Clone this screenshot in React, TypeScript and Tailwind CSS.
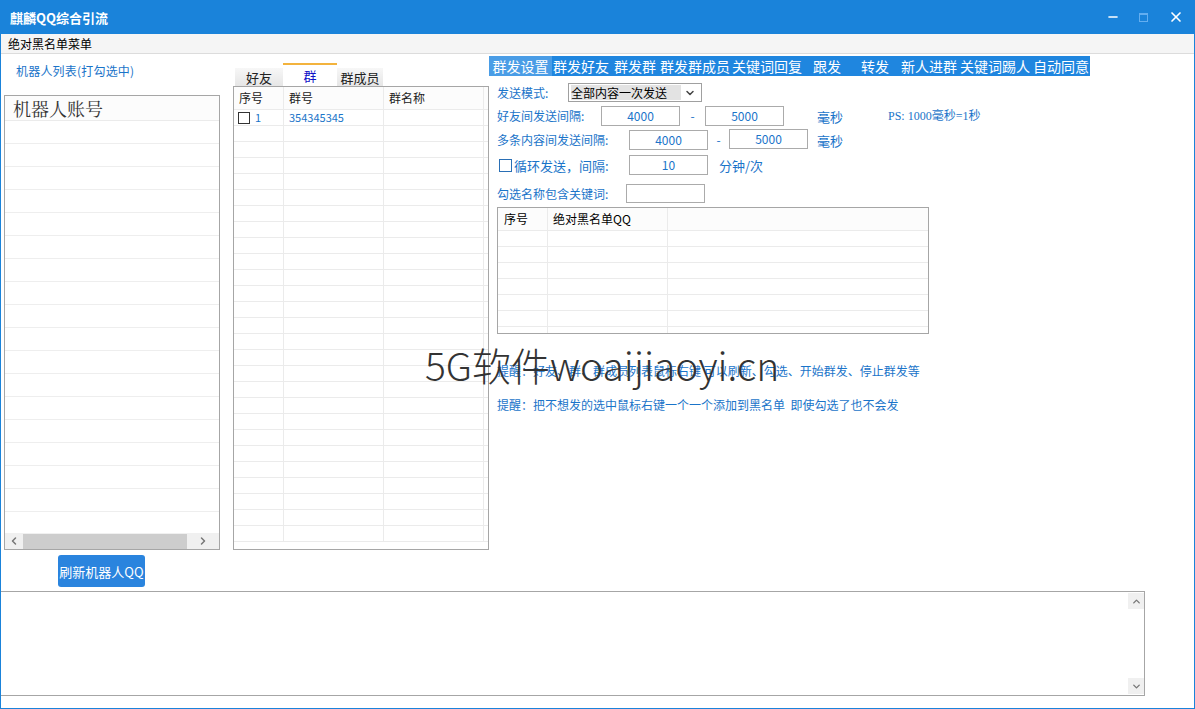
import { X, Minus, ChevronLeft, ChevronRight, ChevronUp, ChevronDown } from 'lucide-react';

const FONT = "font-['Noto_Sans_CJK_SC','Microsoft_YaHei',sans-serif]";

const rightTabs = [
  { label: '群发设置', w: 'w-[63px]', active: true },
  { label: '群发好友', w: 'w-[58px]' },
  { label: '群发群', w: 'w-[50px]' },
  { label: '群发群成员', w: 'w-[70px]' },
  { label: '关键词回复', w: 'w-[74px]' },
  { label: '跟发', w: 'w-[46px]' },
  { label: '转发', w: 'w-[50px]' },
  { label: '新人进群', w: 'w-[58px]' },
  { label: '关键词踢人', w: 'w-[74px]' },
  { label: '自动同意', w: 'w-[58px]' },
];

const NumBox = ({ value, className = '' }: { value?: string; className?: string }) => (
  <div
    className={`w-[79px] h-[20px] border border-[#ababab] bg-white flex items-center justify-center text-[12px] text-[#1a74c9] ${className}`}
  >
    {value}
  </div>
);

const App = () => {
  const robotRows = Array.from({ length: 18 });
  const groupRows = Array.from({ length: 27 });
  const blackRows = Array.from({ length: 7 });

  return (
    <div
      className={`${FONT} relative w-[1195px] h-[709px] bg-white border-x border-b border-[#1a83da] overflow-hidden flex flex-col`}
    >
      {/* title bar */}
      <div className="h-[34px] shrink-0 bg-[#1a83da] flex items-center justify-between pl-[9px]">
        <span className="text-white text-[13px] font-bold leading-none">麒麟QQ综合引流</span>
        <div className="flex items-center h-full">
          <div className="w-[30px] flex justify-center text-white">
            <Minus size={14} strokeWidth={2.5} />
          </div>
          <div className="w-[30px] flex justify-center">
            <div className="w-[9px] h-[9px] border border-[#63aef0] border-t-2" />
          </div>
          <div className="w-[36px] flex justify-center text-white">
            <X size={16} strokeWidth={2.5} />
          </div>
        </div>
      </div>

      {/* menu bar */}
      <div className="h-[20px] shrink-0 bg-[#f5f5f5] border-b border-[#dcdcdc] flex items-center pl-[7px]">
        <span className="text-[12px] text-black leading-none">绝对黑名单菜单</span>
      </div>

      {/* main */}
      <div className="h-[537px] shrink-0 flex">
        {/* left column */}
        <div className="w-[232px] shrink-0 pl-[3px]">
          <div className="h-[41px] pt-[9px] pl-[12px] text-[12px] text-[#1a74c9] leading-[16px] tracking-[0.2px]">
            机器人列表(打勾选中)
          </div>
          <div className="w-[216px] h-[455px] border border-[#a6a6a6] flex flex-col">
            <div className="h-[25px] border-b border-[#ebebeb] bg-[#fcfcfc] pl-[8px] flex items-center text-[18px] text-[#333] leading-none font-['Noto_Serif_CJK_SC','Noto_Sans_CJK_SC',serif]">
              机器人账号
            </div>
            <div className="flex-1 overflow-hidden">
              {robotRows.map((_, i) => (
                <div key={i} className="h-[23px] border-b border-[#eeeeee]" />
              ))}
            </div>
            <div className="h-[16px] bg-[#f0f0f0] flex items-center">
              <div className="w-[18px] flex justify-center text-[#777]">
                <ChevronLeft size={12} strokeWidth={3} />
              </div>
              <div className="w-[164px] h-[15px] bg-[#cdcdcd]" />
              <div className="flex-1 flex justify-center text-[#777]">
                <ChevronRight size={12} strokeWidth={3} />
              </div>
            </div>
          </div>
          <button className="mt-[5px] ml-[54px] w-[87px] h-[32px] rounded-[3px] bg-[#2a84de] text-white text-[13px] leading-none">
            刷新机器人QQ
          </button>
        </div>

        {/* middle column */}
        <div className="w-[256px] shrink-0 pt-[9px]">
          <div className="h-[23px] flex items-end pl-[2px]">
            <div className="w-[48px] h-[18px] bg-gradient-to-b from-[#f7f7f7] to-[#e6e6e6] flex items-center justify-center text-[13px] text-[#222] leading-none">
              好友
            </div>
            <div className="w-[54px] h-[23px] bg-white border-t-2 border-[#f3b33d] flex items-center justify-center text-[13px] text-[#1010c8] leading-none">
              群
            </div>
            <div className="w-[46px] h-[18px] bg-gradient-to-b from-[#f7f7f7] to-[#e6e6e6] flex items-center justify-center text-[13px] text-[#222] leading-none">
              群成员
            </div>
          </div>
          <div className="h-[464px] border border-[#a6a6a6] overflow-hidden">
            <div className="h-[23px] grid grid-cols-[50px_100px_100px_1fr] border-b border-[#ebebeb] bg-[#fcfcfc] text-[12px] text-[#222]">
              <div className="border-r border-[#ebebeb] flex items-center pl-[5px]">序号</div>
              <div className="border-r border-[#ebebeb] flex items-center pl-[5px]">群号</div>
              <div className="border-r border-[#ebebeb] flex items-center pl-[5px]">群名称</div>
              <div />
            </div>
            {groupRows.map((_, i) => (
              <div
                key={i}
                className="h-[16px] grid grid-cols-[50px_100px_100px_1fr] border-b border-[#ebebeb] text-[11px] text-[#1a74c9] leading-none"
              >
                <div className="border-r border-[#ebebeb] flex items-center pl-[4px] gap-[5px]">
                  {i === 0 && (
                    <>
                      <span className="w-[12px] h-[12px] border border-[#333] bg-white" />
                      <span>1</span>
                    </>
                  )}
                </div>
                <div className="border-r border-[#ebebeb] flex items-center pl-[5px]">
                  {i === 0 ? '354345345' : ''}
                </div>
                <div className="border-r border-[#ebebeb]" />
                <div />
              </div>
            ))}
          </div>
        </div>

        {/* right column */}
        <div className="flex-1 pt-[2px]">
          <div className="h-[20px] flex">
            {rightTabs.map((t) => (
              <div
                key={t.label}
                className={`${t.w} h-full flex items-center justify-center text-[14px] leading-none text-white ${
                  t.active ? 'bg-[#4a9de6]' : 'bg-[#1f86df]'
                }`}
              >
                {t.label}
              </div>
            ))}
          </div>

          <div className="pl-[8px] text-[12px] text-[#1a74c9] leading-none">
            <div className="mt-[7px] h-[19px] flex items-center">
              <span className="w-[71px]">发送模式:</span>
              <div className="w-[134px] h-[19px] border border-[#a0a0a0] flex items-center justify-between pl-[2px] pr-[5px]">
                <span className="bg-[#e3e3e3] text-black text-[12px] h-[15px] flex items-center pr-[14px]">全部内容一次发送</span>
                <ChevronDown size={12} strokeWidth={3} className="text-[#444]" />
              </div>
            </div>

            <div className="mt-[4px] h-[20px] flex items-center">
              <span className="w-[104px]">好友间发送间隔:</span>
              <NumBox value="4000" />
              <span className="w-[25px] text-center">-</span>
              <NumBox value="5000" />
              <span className="ml-[33px] text-[13px]">毫秒</span>
              <span className="ml-[45px] text-[12px] font-['Liberation_Serif','Noto_Sans_CJK_SC',serif]">PS: 1000毫秒=1秒</span>
            </div>

            <div className="mt-[4px] h-[20px] flex items-center">
              <span className="w-[132px]">多条内容间发送间隔:</span>
              <NumBox value="4000" />
              <span className="w-[21px] text-center">-</span>
              <NumBox value="5000" className="-mt-[3px]" />
              <span className="ml-[9px] text-[13px]">毫秒</span>
            </div>

            <div className="mt-[5px] h-[20px] flex items-center">
              <div className="w-[132px] flex items-center pl-[2px]">
                <span className="w-[13px] h-[13px] border border-[#2a6fb5] bg-white mr-[2px]" />
                <span className="text-[13px]">循环发送，间隔:</span>
              </div>
              <NumBox value="10" />
              <span className="ml-[11px] text-[13px]">分钟/次</span>
            </div>

            <div className="mt-[9px] h-[19px] flex items-center">
              <span className="w-[129px]">勾选名称包含关键词:</span>
              <div className="w-[79px] h-[19px] border border-[#ababab]" />
            </div>

            <div className="mt-[4px] w-[432px] h-[127px] border border-[#a6a6a6] overflow-hidden">
              <div className="h-[23px] grid grid-cols-[50px_120px_1fr] border-b border-[#ebebeb] bg-[#fcfcfc] text-[12px] text-black">
                <div className="border-r border-[#ebebeb] flex items-center pl-[6px]">序号</div>
                <div className="border-r border-[#ebebeb] flex items-center pl-[5px]">绝对黑名单QQ</div>
                <div />
              </div>
              {blackRows.map((_, i) => (
                <div key={i} className="h-[16px] grid grid-cols-[50px_120px_1fr] border-b border-[#ebebeb]">
                  <div className="border-r border-[#ebebeb]" />
                  <div className="border-r border-[#ebebeb]" />
                  <div />
                </div>
              ))}
            </div>

            <div className="mt-[29px] h-[16px] flex items-center">
              提醒：好友、群、群成员列表鼠标右键 可以刷新、勾选、开始群发、停止群发等
            </div>
            <div className="mt-[18px] h-[16px] flex items-center">
              提醒：把不想发的选中鼠标右键一个一个添加到黑名单&nbsp;&nbsp;即使勾选了也不会发
            </div>
          </div>
        </div>
      </div>

      {/* log box */}
      <div className="w-[1144px] h-[105px] shrink-0 border-y border-r border-[#a6a6a6] flex justify-end">
        <div className="w-[16px] h-full flex flex-col justify-between py-[1px]">
          <div className="h-[16px] bg-[#f0f0f0] flex items-center justify-center text-[#777]">
            <ChevronUp size={11} strokeWidth={3} />
          </div>
          <div className="h-[16px] bg-[#f0f0f0] flex items-center justify-center text-[#777]">
            <ChevronDown size={11} strokeWidth={3} />
          </div>
        </div>
      </div>

      {/* watermark */}
      <div className="absolute left-[424px] top-[345px] text-[39px] leading-none text-[#333] font-light font-['Noto_Sans_CJK_SC',sans-serif] pointer-events-none">
        5G软件woaijiaoyi.cn
      </div>
    </div>
  );
};

export default App;
